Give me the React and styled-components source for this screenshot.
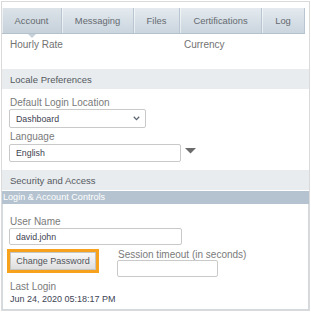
import React from "react";
import styled, { createGlobalStyle } from "styled-components";

const GlobalStyle = createGlobalStyle`
  html, body { margin: 0; padding: 0; background: #fff; }
  body { font-family: "Liberation Sans", Arial, sans-serif; }
  * { box-sizing: border-box; }
`;

const Frame = styled.div`
  width: 309px;
  height: 310px;
  margin: 1px 0 0 1px;
  border: 1px solid #dadada;
  padding-top: 6px;
  display: flex;
  flex-direction: column;
  overflow: hidden;
`;

const TabBar = styled.div`
  display: flex;
  width: 303px;
  height: 26px;
  background: linear-gradient(#e4eaef, #cad5de);
  border-bottom: 1px solid #b3c1cd;
  flex-shrink: 0;
`;

const Tab = styled.div`
  position: relative;
  width: ${(p) => p.$w}px;
  display: flex;
  align-items: center;
  justify-content: center;
  font-size: 9.4px;
  color: #656a70;
  border-right: 1px solid #b9c6d1;
  box-shadow: inset 1px 0 0 rgba(255, 255, 255, 0.55);
  background: ${(p) => (p.$active ? "linear-gradient(#dce3e9, #c6d1da)" : "transparent")};
  &::after {
    content: "";
    display: ${(p) => (p.$active ? "block" : "none")};
    position: absolute;
    left: 50%;
    bottom: -5px;
    margin-left: -4px;
    border-left: 4px solid transparent;
    border-right: 4px solid transparent;
    border-top: 4px solid #c6d0d9;
  }
`;

const InfoRow = styled.div`
  display: grid;
  grid-template-columns: 174px 1fr;
  height: 35px;
  padding: 4px 0 0 8px;
  font-size: 10px;
  line-height: 14px;
  color: #727272;
  flex-shrink: 0;
`;

const SectionHeader = styled.div`
  height: 20px;
  flex-shrink: 0;
  margin-top: ${(p) => p.$mt || 0}px;
  display: flex;
  align-items: center;
  padding-left: 8px;
  background: #e8ecef;
  color: #55595e;
  font-size: 9.5px;
`;

const Block = styled.div`
  padding-left: 7px;
  display: flex;
  flex-direction: column;
  align-items: flex-start;
`;

const Label = styled.div`
  margin-top: ${(p) => p.$mt || 0}px;
  padding-left: 1px;
  font-size: 10px;
  line-height: 12px;
  color: #7a7a7a;
  white-space: nowrap;
`;

const SelectBox = styled.div`
  width: 137px;
  height: 19px;
  border: 1px solid #c9c9c9;
  border-radius: 2px;
  background: #fff;
  display: flex;
  align-items: center;
  justify-content: space-between;
  padding: 0 5px 0 6px;
  font-size: 8.8px;
  color: #3e4350;
`;

const InputRow = styled.div`
  display: flex;
  align-items: center;
  margin-top: ${(p) => p.$mt || 0}px;
`;

const TextBox = styled.div`
  width: ${(p) => p.$w}px;
  height: ${(p) => p.$h || 17}px;
  margin-top: ${(p) => p.$mt || 0}px;
  border: 1px solid #c9c9c9;
  border-radius: 2px;
  background: #fff;
  display: flex;
  align-items: center;
  padding-left: 6px;
  font-size: 8.8px;
  color: #3e4350;
`;

const DropArrow = styled.svg`
  margin-left: 4px;
  margin-top: -5px;
`;

const Group = styled.div`
  margin-top: 1px;
  flex: 1;
  display: flex;
  flex-direction: column;
`;

const GroupHeader = styled.div`
  height: 13px;
  background: #b4c3cf;
  color: #fff;
  font-size: 9.1px;
  line-height: 13px;
  padding-left: 1px;
  white-space: nowrap;
`;

const GroupBody = styled.div`
  flex: 1;
  border: 1px solid #d2d9df;
  border-top: none;
  padding-left: 6px;
  display: flex;
  flex-direction: column;
  align-items: flex-start;
`;

const ActionRow = styled.div`
  display: flex;
  align-items: flex-start;
  margin-top: 4px;
`;

const Highlight = styled.div`
  margin-left: -2px;
  width: 92px;
  height: 24px;
  border: 3px solid #f6a21d;
`;

const Button = styled.div`
  width: 100%;
  height: 100%;
  border: 1px solid #c4c4c4;
  background: linear-gradient(#f8f8f8, #dedede);
  display: flex;
  align-items: center;
  justify-content: center;
  font-size: 9px;
  color: #50545b;
  white-space: nowrap;
`;

const SessionCol = styled.div`
  margin-left: 18px;
  display: flex;
  flex-direction: column;
  align-items: flex-start;
`;

const Value = styled.div`
  padding-left: 1px;
  font-size: 9px;
  line-height: 12px;
  color: #404555;
  white-space: nowrap;
`;

const tabs = [
  { name: "Account", w: 60, active: true },
  { name: "Messaging", w: 72 },
  { name: "Files", w: 46 },
  { name: "Certifications", w: 82 },
  { name: "Log", w: 43 },
];

export default function App() {
  return (
    <>
      <GlobalStyle />
      <Frame>
        <TabBar>
          {tabs.map((t) => (
            <Tab key={t.name} $w={t.w} $active={t.active}>
              {t.name}
            </Tab>
          ))}
        </TabBar>
        <InfoRow>
          <div>Hourly Rate</div>
          <div>Currency</div>
        </InfoRow>
        <SectionHeader>Locale Preferences</SectionHeader>
        <Block>
          <Label $mt={8}>Default Login Location</Label>
          <SelectBox>
            <span>Dashboard</span>
            <svg width="7" height="5" viewBox="0 0 7 5">
              <path d="M0.8 0.8 L3.5 3.6 L6.2 0.8" fill="none" stroke="#5b6473" strokeWidth="1.3" />
            </svg>
          </SelectBox>
          <Label $mt={3}>Language</Label>
          <InputRow $mt={1}>
            <TextBox $w={172} $h={18}>English</TextBox>
            <DropArrow width="11" height="6" viewBox="0 0 11 6">
              <polygon points="0,0 11,0 5.5,5.5" fill="#6b6b6b" />
            </DropArrow>
          </InputRow>
        </Block>
        <SectionHeader $mt={8}>Security and Access</SectionHeader>
        <Group>
          <GroupHeader>Login &amp; Account Controls</GroupHeader>
          <GroupBody>
            <Label $mt={12}>User Name</Label>
            <TextBox $w={173}>david.john</TextBox>
            <ActionRow>
              <Highlight>
                <Button>Change Password</Button>
              </Highlight>
              <SessionCol>
                <Label>Session timeout (in seconds)</Label>
                <TextBox $w={101} $mt={-1} />
              </SessionCol>
            </ActionRow>
            <Label $mt={4}>Last Login</Label>
            <Value>Jun 24, 2020 05:18:17 PM</Value>
          </GroupBody>
        </Group>
      </Frame>
    </>
  );
}
